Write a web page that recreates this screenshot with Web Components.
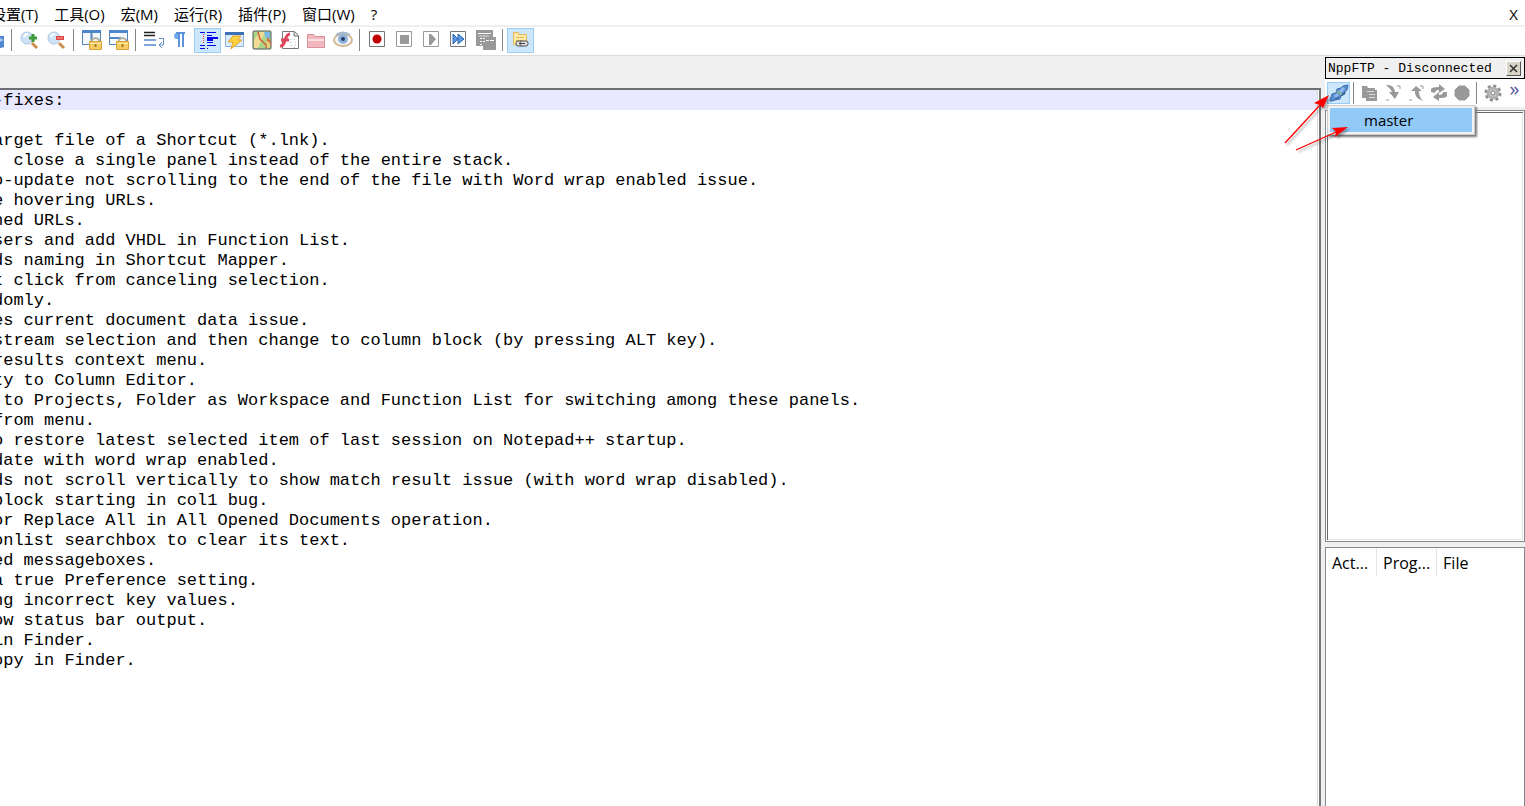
<!DOCTYPE html>
<html lang="zh-CN">
<head>
<meta charset="utf-8">
<title>Notepad++</title>
<style>
html, body { margin: 0; height: 100%; }
body { font: 15px/20px "Open Sans", "Noto Sans CJK SC", sans-serif; color: #000; background: #fff; overflow: hidden; }
</style>
</head>
<body>
<npp-app></npp-app>
<script>
const icons = {
  find: '<path d="M4 3h8l3 3h4v11q-8 3-17 0z" fill="#4f86cf"/><path d="M15 8l4 2-4 2z" fill="#a6c8f2"/>',
  zoomin: '<circle cx="7" cy="8" r="6" fill="#cfe3f7" stroke="#a9c6e6" stroke-width="1"/><path d="M4 7q1-3 4-3" stroke="#fff" stroke-width="2" fill="none"/><path d="M12 13l5 5" stroke="#c98d4d" stroke-width="3"/><path d="M13 12l4 4" stroke="#f0cfa0"/><path d="M13 4v8M9 8h8" stroke="#3c9a3c" stroke-width="3"/>',
  zoomout: '<circle cx="7" cy="8" r="6" fill="#cfe3f7" stroke="#a9c6e6" stroke-width="1"/><path d="M4 7q1-3 4-3" stroke="#fff" stroke-width="2" fill="none"/><path d="M12 13l5 5" stroke="#c98d4d" stroke-width="3"/><path d="M13 12l4 4" stroke="#f0cfa0"/><path d="M9 8h8" stroke="#e04848" stroke-width="4"/><path d="M10 8h6" stroke="#ff9a90"/>',
  syncv: '<path d="M.5.5h18v14H.5z" fill="#f4f9ff" stroke="#5583b5"/><path d="M0 0h19v3H0z" fill="#4d86cc"/><path d="M9.500 1v14" stroke="#5583b5" stroke-width="2"/><path d="M10 12V10a4 4 0 0 1 7 0v2" fill="none" stroke="#b5b0a2" stroke-width="2"/><path d="M7.500 11.500h12v8h-12z" fill="#f6cd62" stroke="#d9a23b"/><path d="M8 13.500h11" stroke="#ffe9a5"/><path d="M13.500 14v3" stroke="#a87820" stroke-width="2"/>',
  synch: '<path d="M.5.5h18v14H.5z" fill="#f4f9ff" stroke="#5583b5"/><path d="M0 0h19v3H0zM0 7h12v2H0z" fill="#4d86cc"/><path d="M10 12V10a4 4 0 0 1 7 0v2" fill="none" stroke="#b5b0a2" stroke-width="2"/><path d="M7.500 11.500h12v8h-12z" fill="#f6cd62" stroke="#d9a23b"/><path d="M8 13.500h11" stroke="#ffe9a5"/><path d="M13.500 14v3" stroke="#a87820" stroke-width="2"/>',
  wrap: '<path d="M0 2.500h11M0 5.500h11" stroke="#222" stroke-width="1.500"/><path d="M0 10h12M0 15h12" stroke="#7ea6dc" stroke-width="2"/><path d="M15 8.500h4.500V15H15m3-3l-3 3 3 3" fill="none" stroke="#5d8acc"/>',
  para: '<path d="M9 3H6a3 3 0 0 0 0 6h3z" fill="#72a9e8"/><path d="M8 3v14M12 3v14M5 3h9" stroke="#5c93da" stroke-width="2"/>',
  indent: '<path d="M2 2.500h5M9 2.500h9M9 5.500h5M2 15.500h5M9 15.500h9M9 18.500h1M2 18.500h5M9 12.500h6" stroke="#00e"/><path d="M9 8h11M9 10h6" stroke="#00e" stroke-width="2"/><path d="M5.500 4v10" stroke="#f33" stroke-dasharray="1 1"/>',
  lang: '<path d="M.5 2.500h18v14H.5z" fill="#dcecff" stroke="#8eb1dc"/><path d="M0 2h19v3H0z" fill="#3c72b5"/><path d="M8 6h8l-3 4h4L6 19l2-7H3z" fill="#ffd13e" stroke="#e0a529"/>',
  map: '<rect x="1" y="1" width="18" height="18" rx="1" fill="#a9d689" stroke="#555"/><path d="M2 10l6-8h5L6 18H2z" fill="#f0dc94"/><path d="M12 2h6v6h-4z" fill="#76b8e8"/><path d="M6 2l2 7 6 6M14 18l2-9 3 5" fill="none" stroke="#d45e3c" stroke-width="1.500"/><path d="M14 10l4 3v5h-3z" fill="#e3d27c"/>',
  func: '<path d="M3.500 1.500h12l4 4v13h-16z" fill="#fff" stroke="#777"/><path d="M15 2v4h4" fill="#ddd" stroke="#777"/><path d="M1 16c6 1 4-12 10-12M2 10h8" fill="none" stroke="#e04458" stroke-width="3"/><path d="M12 9v8m3-8l2 4-2 5" fill="none" stroke="#aaa" stroke-dasharray="1 2"/>',
  folder: '<path d="M1.500 4.500h6l2 2h9v11h-17z" fill="#f1b7bd" stroke="#d69098"/><path d="M2 9h16v2H2z" fill="#fae0e3"/>',
  eye: '<ellipse cx="10" cy="10" rx="9" ry="6" fill="#f4f6f8" stroke="#d2b893" stroke-width="2"/><path d="M3 5q7-5 14 0" fill="none" stroke="#9eb7ce" stroke-width="2"/><circle cx="10" cy="9" r="5" fill="#8fb4dc"/><circle cx="10" cy="9" r="2" fill="#253c63"/>',
  rec: '<path d="M1.500 1.500h15v15h-15z" fill="#fff" stroke="#777"/><circle cx="9" cy="9" r="4.500" fill="#c00000"/>',
  stop: '<path d="M1.500 1.500h15v15h-15z" fill="#fff" stroke="#999"/><path d="M5 5h9v9H5z" fill="#999"/>',
  play: '<path d="M1.500 1.500h15v15h-15z" fill="#fff" stroke="#999"/><path d="M7 4h2l5 5-5 6H7z" fill="#999"/>',
  ff: '<path d="M1.500 1.500h15v15h-15z" fill="#fff" stroke="#777"/><path d="M4 4l5 5-5 5zM9 4l6 5-6 5z" fill="#5d98e4" stroke="#2d62ac"/>',
  save: '<path d="M0 0h17v7h3v13H7v-4H0z" fill="#999"/><path d="M2 3.500h13M4 8.500h2m1 0h2M4 11.500h2m1 0h2M4 14.500h2M10 10.500h3m1 0h4" stroke="#fff"/><path d="M3 6h10" stroke="#ddd"/>',
  link: '<path d="M2.500 2.500h5v2h8v10h-13z" fill="#ffe9a5" stroke="#dfb95c"/><path d="M5 7.500h8M5 10.500h5" stroke="#e3b95a"/><rect x="5" y="11" width="8" height="5" rx="2" fill="#ddd" stroke="#555"/><rect x="9" y="11" width="8" height="5" rx="2" fill="#ddd" stroke="#555"/><path d="M8 13.500h6" stroke="#444"/>',
  plug: '<path d="M1 18l1-4 1-3 4-1 1-4 4-1 2-2 5-1-1 5-2 1v3l-4 2-1 3-5 1-3 1z" fill="#5a8ed0" stroke="#3c6cab"/><path d="M6 14l3-3m2-2l4-4" stroke="#8fbcf0" stroke-width="3"/><path d="M8 8l5 4" stroke="#86b79a" stroke-width="2"/><path d="M12 13l4-4M6 16l4-2" stroke="#2c5188"/>',
  files: '<path d="M2 3h5l1 2h7v2h2v11H6v-3H2z" fill="#999"/><path d="M7 8.500h7m-5 3h6m-6 3h6" stroke="#ddd"/>',
  down: '<path d="M3 2q8-1 9 7h4l-4 7-6-7h3Q8 6 3 2z" fill="#999"/><path d="M3 17h3m8-14h3v3" stroke="#999" fill="none"/>',
  up: '<path d="M3 2h4m2 6H5l5-5 6 5h-3q0 6 4 10Q8 15 9 8z" fill="#999"/><path d="M3 17h3m8-14h3v3" stroke="#999" fill="none"/>',
  refresh: '<path d="M2 9V6q1-2 8-2V1l6 5-6 4V7Q6 7 6 10zM18 9v4q-1 2-8 2v3l-6-4 6-5v3q4 0 4-3z" fill="#999"/>',
  abort: '<path d="M7 3h6l4 4v6l-4 4H7l-4-4V7z" fill="#999" stroke="#999"/>',
  gear: '<circle cx="10" cy="10" r="7" fill="none" stroke="#8b8b8b" stroke-width="3" stroke-dasharray="3 2.500"/><circle cx="10" cy="10" r="5" fill="#ccc" stroke="#b0b0b0" stroke-width="3"/><circle cx="10" cy="10" r="2" fill="#fff" stroke="#777"/>'
};
const define = (name, html) => customElements.define(name, class extends HTMLElement {
  constructor() {
    super();
    const t = document.createElement('template');
    t.innerHTML = html;
    this.attachShadow({ mode: 'open' }).append(t.content.cloneNode(true));
  }
});

customElements.define('tool-button', class extends HTMLElement {
  connectedCallback() {
    if (this.shadowRoot) return;
    this.attachShadow({ mode: 'open' }).innerHTML = `<style>
      :host { display: block; flex: none; width: var(--tool-w, 27px); height: var(--tool-h, 25px); }
      button { box-sizing: border-box; width: 100%; height: 100%; padding: 0; border: 1px solid transparent; background: none; display: grid; place-items: center; }
      :host([active]) button { background: #cce6fc; border-color: #99cdf5; }
      svg { display: block; width: 20px; height: 20px; overflow: visible; }
    </style><button type="button" aria-label="${this.getAttribute('label')}"><svg viewBox="0 0 20 20">${icons[this.getAttribute('icon')]}</svg></button>`;
  }
});

define('tool-separator', `<style>
  :host { display: block; flex: none; width: 1px; height: 22px; background: #868686; margin: 0 var(--sep-after, 4px) 0 3px; }
</style>`);

define('menu-bar', `<style>
  :host { display: block; border-bottom: 2px solid #efefef; background: #fff; }
  nav { display: flex; align-items: center; height: 25px; }
  .items { display: flex; gap: 16px; flex: 1; margin-left: -9px; padding-top: 2px; white-space: nowrap; }
  button { font: inherit; color: inherit; border: 0; padding: 0; background: none; }
  .close { margin-right: 7px; padding-top: 2px; }
</style>
<nav aria-label="菜单"><div class="items">
<button>设置(T)</button><button>工具(O)</button><button>宏(M)</button><button>运行(R)</button><button>插件(P)</button><button>窗口(W)</button><button>?</button>
</div><button class="close">X</button></nav>`);

define('main-toolbar', `<style>
  :host { display: flex; align-items: center; height: 26px; padding-bottom: 2px; border-bottom: 1px solid #dcdcdc; background: #fff; }
  .first { margin-left: -19px; }
</style>
<tool-button class="first" icon="find" label="Replace"></tool-button><tool-separator></tool-separator>
<tool-button icon="zoomin" label="Zoom In"></tool-button><tool-button icon="zoomout" label="Zoom Out"></tool-button><tool-separator></tool-separator>
<tool-button icon="syncv" label="Synchronize Vertical Scrolling"></tool-button><tool-button icon="synch" label="Synchronize Horizontal Scrolling"></tool-button><tool-separator></tool-separator>
<tool-button icon="wrap" label="Word wrap"></tool-button><tool-button icon="para" label="Show All Characters"></tool-button><tool-button active icon="indent" label="Show Indent Guide"></tool-button><tool-button icon="lang" label="User Defined Dialogue"></tool-button><tool-button icon="map" label="Document Map"></tool-button><tool-button icon="func" label="Function List"></tool-button><tool-button icon="folder" label="Folder as Workspace"></tool-button><tool-button icon="eye" label="Monitoring"></tool-button><tool-separator></tool-separator>
<tool-button icon="rec" label="Start Recording"></tool-button><tool-button icon="stop" label="Stop Recording"></tool-button><tool-button icon="play" label="Playback"></tool-button><tool-button icon="ff" label="Run a Macro Multiple Times"></tool-button><tool-button icon="save" label="Save Macro"></tool-button><tool-separator></tool-separator>
<tool-button active icon="link" label="Show NppFTP Window"></tool-button>`);

define('text-editor', `<style>
  :host { display: flex; flex-direction: column; min-width: 0; overflow: hidden; background: #fff; border-top: 2px solid #6e6e72; border-right: 2px solid #77777a; box-shadow: inset -1px 0 #fff, inset -2px 0 #dcdcdc; }
  pre { margin: 0; padding-top: 1px; font: 17px/20px "Liberation Mono", monospace; }
  .current { background: #e8e8ff; margin-right: 2px; height: 19px; }
  .scrolled { display: block; margin-left: -7px; }
</style>
<pre class="current"><span class="scrolled">-fixes:</span></pre>
<pre><span class="scrolled">
arget file of a Shortcut (*.lnk).
: close a single panel instead of the entire stack.
o-update not scrolling to the end of the file with Word wrap enabled issue.
e hovering URLs.
ned URLs.
sers and add VHDL in Function List.
ds naming in Shortcut Mapper.
t click from canceling selection.
domly.
es current document data issue.
stream selection and then change to column block (by pressing ALT key).
results context menu.
ty to Column Editor.
 to Projects, Folder as Workspace and Function List for switching among these panels.
from menu.
o restore latest selected item of last session on Notepad++ startup.
date with word wrap enabled.
ds not scroll vertically to show match result issue (with word wrap disabled).
block starting in col1 bug.
or Replace All in All Opened Documents operation.
onlist searchbox to clear its text.
ed messageboxes.
a true Preference setting.
ng incorrect key values.
ow status bar output.
in Finder.
opy in Finder.</span></pre>`);

define('ftp-panel', `<style>
  :host { display: flex; flex-direction: column; min-height: 0; background: #f0f0f0; }
  header { display: flex; align-items: center; justify-content: space-between; height: 20px; border: 1px solid #000; font: 13px/20px "Liberation Mono", monospace; white-space: nowrap; }
  h2 { font: inherit; margin: 0; padding: 2px 0 0 2px; }
  .close { width: 15px; height: 15px; margin-right: 3px; padding: 0; border: 1px solid; border-color: #fff #555 #555 #fff; background: #d8d4c8; display: grid; place-items: center; }
  .bar { --tool-w: 23px; --tool-h: 22px; --sep-after: 4px; position: relative; display: flex; align-items: center; height: 28px; padding-left: 2px; background: #fff; margin-bottom: 3px; }
  .more { flex: 1; align-self: flex-start; padding: 0; border: 0; background: none; font: 20px/20px "Open Sans", sans-serif; color: #55559a; }
  .menu { position: absolute; left: 2px; top: 26px; width: 142px; margin: 0; padding: 2px; background: #f2f2f2; border: 1px solid #ccc; box-shadow: 2px 2px 2px #777; z-index: 1; }
  .menu button { width: 100%; height: 24px; padding: 0 0 0 34px; border: 0; background: #91c9f7; font: inherit; text-align: left; }
  .tree { box-sizing: border-box; height: 432px; flex: none; background: #fff; border: 1px solid #828790; box-shadow: inset 0 0 0 1px #fff, inset 2px 2px #696969, inset -2px -2px #e3e3e3; }
  .queue { box-sizing: border-box; flex: 1; margin-top: 5px; background: #fff; border: 1px solid #828790; border-bottom: 0; }
  table { border-collapse: collapse; font-size: 16px; }
  th { font-weight: 400; text-align: left; height: 26px; padding: 2px 6px 0; border-right: 1px solid #e5e5e5; white-space: nowrap; }
  th:first-child { min-width: 38px; }
  th:nth-child(2) { min-width: 47px; }
  th:last-child { border: 0; }
</style>
<header><h2>NppFTP - Disconnected</h2><button class="close" aria-label="Close"><svg width="9" height="9"><path d="M1 1l7 7M8 1L1 8" stroke="#333" stroke-width="1.500"/></svg></button></header>
<div class="bar"><tool-button active icon="plug" label="Connect"></tool-button><tool-separator></tool-separator>
<tool-button icon="files" label="Open Directory"></tool-button><tool-button icon="down" label="Download"></tool-button><tool-button icon="up" label="Upload"></tool-button><tool-button icon="refresh" label="Refresh"></tool-button><tool-button icon="abort" label="Abort"></tool-button><tool-separator></tool-separator><tool-button icon="gear" label="Settings"></tool-button><button class="more">»</button>
<div class="menu" role="menu"><button role="menuitem">master</button></div></div>
<div class="tree" role="tree"></div>
<div class="queue"><table><thead><tr><th>Act...</th><th>Prog...</th><th>File</th></tr></thead></table></div>`);

define('callout-arrows', `<style>
  :host { display: block; width: 70px; height: 64px; pointer-events: none; filter: drop-shadow(2px 2px 1px #0005); }
  svg { display: block; }
</style>
<svg width="70" height="64"><path d="M5 50L40 12M16 57L56 39" stroke="#f00" stroke-width="1.300"/><path d="M49 2L43 15 40 12 34 10zM68 34L55 44 56 39 52 35z" fill="#f00"/></svg>`);

define('npp-app', `<style>
  :host { display: flex; flex-direction: column; height: 100vh; background: #f0f0f0; }
  main { position: relative; flex: 1; min-height: 0; display: grid; grid-template-columns: minmax(0, 1fr) 200px; column-gap: 4px; }
  text-editor { margin-top: 32px; }
  ftp-panel { margin-top: 1px; }
  callout-arrows { position: absolute; right: 175px; top: 37px; z-index: 2; }
</style>
<menu-bar></menu-bar><main-toolbar></main-toolbar>
<main><text-editor></text-editor><ftp-panel></ftp-panel><callout-arrows></callout-arrows></main>`);
</script>
</body>
</html>
